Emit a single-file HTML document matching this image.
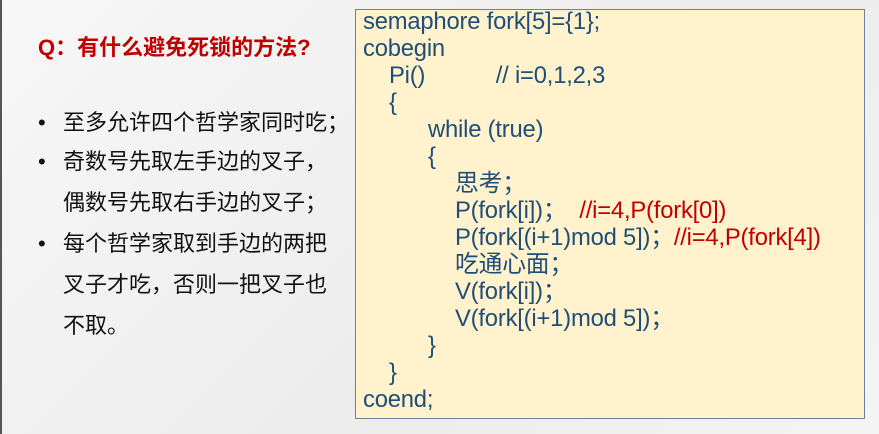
<!DOCTYPE html>
<html><head><meta charset="utf-8"><style>
body{margin:0;width:879px;height:434px;background:linear-gradient(135deg,#f7f7f7,#ececec 60%,#f4f4f4);position:relative;overflow:hidden;font-family:"Liberation Sans","Noto Sans CJK SC",sans-serif;}
.edge{position:absolute;left:0;top:0;width:2px;height:434px;background:#555;}
.t{position:absolute;left:38px;top:30px;font-size:22px;font-weight:bold;color:#c00000;}
.b{position:absolute;left:38px;font-size:22px;color:#111;white-space:nowrap;}
.b span{display:inline-block;width:25px;}
.box{position:absolute;left:355px;top:9px;width:510px;height:410px;background:#fff2cc;border:1.5px solid #6d8299;box-sizing:border-box;}
.c{position:absolute;font-size:23.8px;color:#1f4e79;white-space:nowrap;line-height:26px;letter-spacing:-0.2px;}
.r{color:#c00000;}
</style></head><body>
<div class="edge"></div>
<div class="t">Q：有什么避免死锁的方法?</div>
<div class="b" style="top:105px"><span>•</span>至多允许四个哲学家同时吃；</div>
<div class="b" style="top:144px"><span>•</span>奇数号先取左手边的叉子，</div>
<div class="b" style="top:185px"><span></span>偶数号先取右手边的叉子；</div>
<div class="b" style="top:226px"><span>•</span>每个哲学家取到手边的两把</div>
<div class="b" style="top:267px"><span></span>叉子才吃，否则一把叉子也</div>
<div class="b" style="top:308px"><span></span>不取。</div>
<div class="box"></div>
<div class="c" style="left:363px;top:9px">semaphore fork[5]={1};</div>
<div class="c" style="left:363px;top:36px">cobegin</div>
<div class="c" style="left:389px;top:63px">Pi()&nbsp;&nbsp;&nbsp;&nbsp;&nbsp;&nbsp;&nbsp;&nbsp;&nbsp;&nbsp; // i=0,1,2,3</div>
<div class="c" style="left:389px;top:90px">{</div>
<div class="c" style="left:428px;top:117px">while (true)</div>
<div class="c" style="left:428px;top:144px">{</div>
<div class="c" style="left:455px;top:171px">思考；</div>
<div class="c" style="left:455px;top:198px">P(fork[i])；&nbsp; <span class="r">//i=4,P(fork[0])</span></div>
<div class="c" style="left:455px;top:225px">P(fork[(i+1)mod 5])；<span class="r">//i=4,P(fork[4])</span></div>
<div class="c" style="left:455px;top:252px">吃通心面；</div>
<div class="c" style="left:455px;top:279px">V(fork[i])；</div>
<div class="c" style="left:455px;top:306px">V(fork[(i+1)mod 5])；</div>
<div class="c" style="left:428px;top:333px">}</div>
<div class="c" style="left:389px;top:360px">}</div>
<div class="c" style="left:363px;top:387px">coend;</div>
</body></html>
